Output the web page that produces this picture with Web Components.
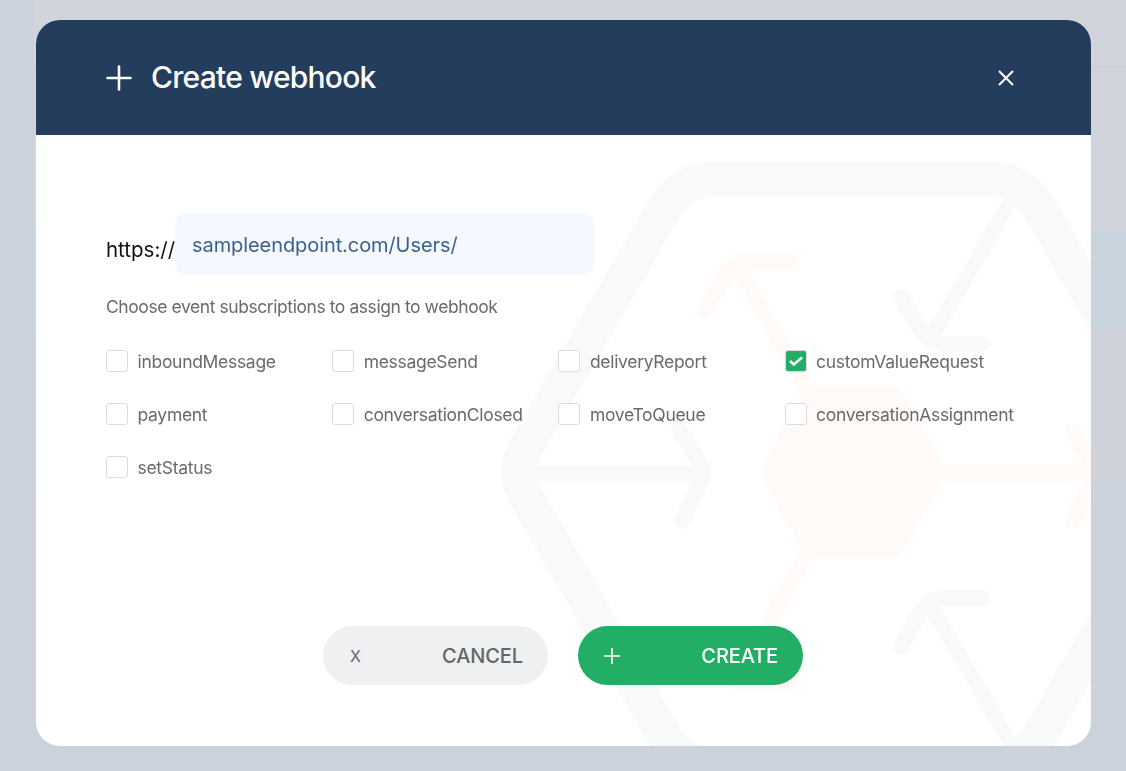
<!DOCTYPE html>
<html lang="en">
<head>
<meta charset="utf-8">
<title>Create webhook</title>
<style>
  html, body { margin: 0; height: 100%; overflow: hidden; }
  body { font-family: Inter, "Noto Sans", sans-serif; background: #cbd2dc; }
</style>
</head>
<body>
<page-backdrop></page-backdrop>
<webhook-modal heading="Create webhook">
  <url-field prefix="https://" value="sampleendpoint.com/Users/"></url-field>
  <p slot="hint">Choose event subscriptions to assign to webhook</p>
  <event-check slot="events">inboundMessage</event-check>
  <event-check slot="events">messageSend</event-check>
  <event-check slot="events">deliveryReport</event-check>
  <event-check slot="events" checked>customValueRequest</event-check>
  <event-check slot="events">payment</event-check>
  <event-check slot="events">conversationClosed</event-check>
  <event-check slot="events">moveToQueue</event-check>
  <event-check slot="events">conversationAssignment</event-check>
  <event-check slot="events">setStatus</event-check>
  <pill-button slot="actions" icon="X" tone="plain">CANCEL</pill-button>
  <pill-button slot="actions" icon="plus" tone="green">CREATE</pill-button>
</webhook-modal>

<script>
/* create-webhook dialog over a dimmed page. Vanilla custom elements, open shadow roots. */
(function () {
  const STROKE_GRAY = '#f8f9fb', STROKE_ORANGE = '#fff9f7';

  function shadow(host, html) {
    host.attachShadow({ mode: 'open' }).innerHTML = html;
  }

  // the dimmed page behind the dialog: a rail on the left, stacked bands on the right
  class PageBackdrop extends HTMLElement {
    connectedCallback() {
      shadow(this, `
        <style>
          :host { display: flex; height: 100vh; background: #cbd2dc; }
          .rail { width: 33px; flex: none; background: #cbd2dc; }
          .main { flex: 1; display: flex; flex-direction: column; }
          .top { height: 67px; box-sizing: border-box; background: #d1d4db; border-bottom: 1px solid #c9ccd4; }
          .a { height: 165px; background: #d0d3da; }
          .b { height: 98px; background: #c9d3dd; }
          .c { height: 152px; background: #cfd2da; }
          .d { flex: 1; background: #cbd2dc; }
        </style>
        <div class="rail"></div>
        <div class="main"><div class="top"></div><div class="a"></div><div class="b"></div><div class="c"></div><div class="d"></div></div>`);
    }
  }

  // faint hexagon network printed behind the dialog body; coords are page px
  class HexMark extends HTMLElement {
    connectedCallback() {
      shadow(this, `
        <style>
          :host { position: absolute; inset: 0; display: block; overflow: hidden; pointer-events: none; }
          svg { display: block; width: 100%; height: 100%; }
        </style>
        <svg viewBox="36 135 1055 611" fill="none" stroke-linecap="round" stroke-linejoin="round">
          <g stroke="${STROKE_GRAY}">
            <path stroke-width="35" d="M 525 449 L 664 209 Q 682 178.5 718 178.5 L 986 178.5 Q 1022 178.5 1040 209 L 1179 449 Q 1192 472 1179 495 L 1040 735 Q 1022 766 986 766 L 718 766 Q 682 766 664 735 L 525 495 Q 512 472 525 449 Z"/>
            <g stroke-width="16">
              <path d="M 530 473 L 700 473"/>
              <path d="M 679 428 L 702 467 Q 705 473 702 479 L 682 521"/>
              <path stroke-width="15" d="M 1024 178 L 934 333"/>
              <path d="M 901 296 L 918 326 Q 928 344 948 344 L 982 344"/>
              <path stroke-width="15" d="M 1024 766 L 934 611"/>
              <path d="M 901 647 L 918 616 Q 928 598 948 598 L 982 598"/>
            </g>
          </g>
          <g stroke="${STROKE_ORANGE}">
            <path fill="${STROKE_ORANGE}" stroke-width="20" d="M 771 472 L 812 397 L 894 397 L 935 472 L 894 547 L 812 547 Z"/>
            <g stroke-width="16">
              <path d="M 940 473 L 1093 473"/>
              <path d="M 1072 431 L 1094 467 Q 1098 473 1094 479 L 1072 521"/>
              <path stroke-width="14" d="M 741 272 L 808 392"/>
              <path d="M 705 310 L 724 278 Q 734 261 752 261 L 788 261"/>
              <path stroke-width="14" d="M 741 672 L 808 552"/>
              <path d="M 705 634 L 724 666 Q 734 683 752 683 L 788 683"/>
            </g>
          </g>
        </svg>`);
    }
  }

  class WebhookModal extends HTMLElement {
    connectedCallback() {
      shadow(this, `
        <style>
          :host { position: fixed; left: 36px; top: 20px; width: 1055px; height: 726px; display: flex; flex-direction: column;
                  border-radius: 24px; overflow: hidden; background: #fff; font-family: Inter, "Noto Sans", sans-serif; }
          header { height: 115px; flex: none; background: #243d5c; color: #fff; display: flex; align-items: center;
                   padding: 0 77px 0 70px; box-sizing: border-box; }
          header svg.plus { width: 26px; height: 26px; flex: none; }
          h1 { margin: 0 0 0 19px; flex: 1; font-size: 30px; font-weight: 500; letter-spacing: -0.75px; line-height: 34px; position: relative; top: -1px; }
          header svg.close { width: 16px; height: 16px; flex: none; }
          main { position: relative; flex: 1; display: flex; flex-direction: column; padding: 78px 70px 61px; box-sizing: border-box; }
          main > * { position: relative; }
          main > hex-mark { position: absolute; }
          ::slotted(p) { margin: 21px 0 0; font-size: 17.5px; line-height: 22px; letter-spacing: -0.43px; color: #6a6a6a; }
          .events { margin-top: 32px; display: grid; grid-template-columns: repeat(4, 226.2px); grid-auto-rows: 53px; }
          .actions { margin-top: auto; padding-right: 1px; display: flex; justify-content: center; gap: 30px; }
        </style>
        <header>
          <svg class="plus" viewBox="0 0 26 26" fill="none" stroke="#fff" stroke-width="2.6" stroke-linecap="round"><path d="M13 1.5v23M1.5 13h23"/></svg>
          <h1>${this.getAttribute('heading')}</h1>
          <svg class="close" viewBox="0 0 16 16" fill="none" stroke="#fff" stroke-width="2"><path d="M1 1l14 14M15 1L1 15"/></svg>
        </header>
        <main>
          <hex-mark></hex-mark>
          <slot></slot>
          <slot name="hint"></slot>
          <div class="events"><slot name="events"></slot></div>
          <div class="actions"><slot name="actions"></slot></div>
        </main>`);
    }
  }

  class UrlField extends HTMLElement {
    connectedCallback() {
      shadow(this, `
        <style>
          :host { display: flex; align-items: flex-end; font-size: 20px; }
          .pre { width: 69px; color: #111; font-size: 20.5px; line-height: 24px; padding-bottom: 13px; }
          .box { width: 419px; height: 62px; box-sizing: border-box; padding: 1px 17px 0; display: flex; align-items: center;
                 background: #f5f9ff; border-radius: 10px; color: #3a6290; letter-spacing: -0.08px; }
        </style>
        <span class="pre">${this.getAttribute('prefix')}</span>
        <div class="box">${this.getAttribute('value')}</div>`);
    }
  }

  class EventCheck extends HTMLElement {
    connectedCallback() {
      const on = this.hasAttribute('checked');
      shadow(this, `
        <style>
          :host { display: flex; align-items: flex-start; gap: 10px; font-size: 17.5px; line-height: 22px; letter-spacing: -0.3px; color: #6a6a6a; }
          .box { width: 22px; height: 22px; box-sizing: border-box; flex: none; border: 1px solid #dcdcdc; border-radius: 3px;
                 background: #fff; display: flex; align-items: center; justify-content: center; }
          .box.on { background: #23ae66; border-color: #dcdcdc; }
          .text { padding-top: 1px; margin-left: -0.5px; }
          svg { width: 14px; height: 12px; }
        </style>
        <span class="box ${on ? 'on' : ''}">${on ? '<svg viewBox="0 0 14 12" fill="none" stroke="#fff" stroke-width="2.6"><path d="M1 6l3.8 3.4L13 2.4"/></svg>' : ''}</span>
        <span class="text"><slot></slot></span>`);
    }
  }

  class PillButton extends HTMLElement {
    connectedCallback() {
      const green = this.getAttribute('tone') === 'green';
      const icon = this.getAttribute('icon') === 'plus'
        ? '<svg width="16" height="16" viewBox="0 0 16 16" fill="none" stroke="#fff" stroke-width="1.7"><path d="M8 0v16M0 8h16"/></svg>'
        : `<span class="ico">${this.getAttribute('icon')}</span>`;
      shadow(this, `
        <style>
          :host { display: flex; align-items: center; justify-content: space-between; width: 225px; height: 59px; box-sizing: border-box;
                  padding: 0 25px 0 ${green ? 26 : 27}px; border-radius: 30px; font-size: 20px; font-weight: 500; letter-spacing: -0.1px;
                  background: ${green ? '#23ae66' : '#eff0f2'}; color: ${green ? '#fff' : '#666'}; }
          .ico { font-size: 16px; font-weight: 400; letter-spacing: 0; }
        </style>
        ${icon}<span><slot></slot></span>`);
    }
  }

  customElements.define('page-backdrop', PageBackdrop);
  customElements.define('hex-mark', HexMark);
  customElements.define('webhook-modal', WebhookModal);
  customElements.define('url-field', UrlField);
  customElements.define('event-check', EventCheck);
  customElements.define('pill-button', PillButton);
})();
</script>
</body>
</html>
